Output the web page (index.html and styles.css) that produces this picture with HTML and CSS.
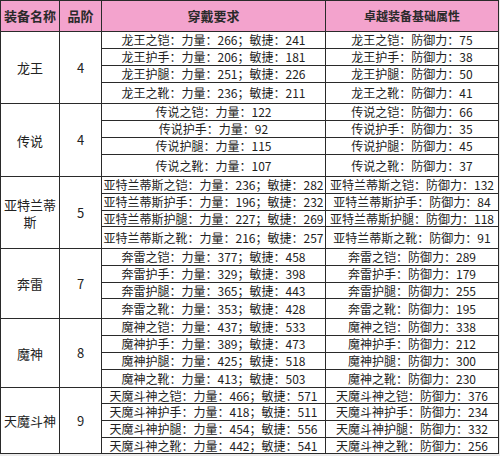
FILE: index.html
```html
<!DOCTYPE html>
<html lang="zh">
<head>
<meta charset="utf-8">
<title>装备属性表</title>
<link rel="stylesheet" href="styles.css">
</head>
<body>
<table class="equip">
  <colgroup>
    <col class="c-name"><col class="c-tier"><col class="c-req"><col class="c-attr">
  </colgroup>
  <thead>
    <tr class="head">
      <th>装备名称</th><th>品阶</th><th>穿戴要求</th><th class="small">卓越装备基础属性</th>
    </tr>
  </thead>
  <tbody>
    <tr class="r17"><td rowspan="4" class="name">龙王</td><td rowspan="4" class="tier">4</td><td>龙王之铠：力量：266；敏捷：241</td><td>龙王之铠：防御力：75</td></tr>
    <tr class="r17"><td>龙王护手：力量：206；敏捷：181</td><td>龙王护手：防御力：38</td></tr>
    <tr class="r17"><td>龙王护腿：力量：251；敏捷：226</td><td>龙王护腿：防御力：50</td></tr>
    <tr class="r21"><td>龙王之靴：力量：236；敏捷：211</td><td>龙王之靴：防御力：41</td></tr>

    <tr class="r17"><td rowspan="4" class="name">传说</td><td rowspan="4" class="tier">4</td><td>传说之铠：力量：122</td><td>传说之铠：防御力：66</td></tr>
    <tr class="r17"><td>传说护手：力量：92</td><td>传说护手：防御力：35</td></tr>
    <tr class="r17"><td>传说护腿：力量：115</td><td>传说护腿：防御力：45</td></tr>
    <tr class="r22"><td>传说之靴：力量：107</td><td>传说之靴：防御力：37</td></tr>

    <tr class="r17"><td rowspan="4" class="name">亚特兰蒂斯</td><td rowspan="4" class="tier">5</td><td>亚特兰蒂斯之铠：力量：236；敏捷：282</td><td>亚特兰蒂斯之铠：防御力：132</td></tr>
    <tr class="r17"><td>亚特兰蒂斯护手：力量：196；敏捷：232</td><td>亚特兰蒂斯护手：防御力：84</td></tr>
    <tr class="r16"><td>亚特兰蒂斯护腿：力量：227；敏捷：269</td><td>亚特兰蒂斯护腿：防御力：118</td></tr>
    <tr class="r22"><td>亚特兰蒂斯之靴：力量：216；敏捷：257</td><td>亚特兰蒂斯之靴：防御力：91</td></tr>

    <tr class="r17"><td rowspan="4" class="name">奔雷</td><td rowspan="4" class="tier">7</td><td>奔雷之铠：力量：377；敏捷：458</td><td>奔雷之铠：防御力：289</td></tr>
    <tr class="r17"><td>奔雷护手：力量：329；敏捷：398</td><td>奔雷护手：防御力：179</td></tr>
    <tr class="r16"><td>奔雷护腿：力量：365；敏捷：443</td><td>奔雷护腿：防御力：255</td></tr>
    <tr class="r20"><td>奔雷之靴：力量：353；敏捷：428</td><td>奔雷之靴：防御力：195</td></tr>

    <tr class="r17"><td rowspan="4" class="name">魔神</td><td rowspan="4" class="tier">8</td><td>魔神之铠：力量：437；敏捷：533</td><td>魔神之铠：防御力：338</td></tr>
    <tr class="r17"><td>魔神护手：力量：389；敏捷：473</td><td>魔神护手：防御力：212</td></tr>
    <tr class="r17"><td>魔神护腿：力量：425；敏捷：518</td><td>魔神护腿：防御力：300</td></tr>
    <tr class="r18"><td>魔神之靴：力量：413；敏捷：503</td><td>魔神之靴：防御力：230</td></tr>

    <tr class="r16"><td rowspan="4" class="name">天魔斗神</td><td rowspan="4" class="tier">9</td><td>天魔斗神之铠：力量：466；敏捷：571</td><td>天魔斗神之铠：防御力：376</td></tr>
    <tr class="r17"><td>天魔斗神护手：力量：418；敏捷：511</td><td>天魔斗神护手：防御力：234</td></tr>
    <tr class="r17"><td>天魔斗神护腿：力量：454；敏捷：556</td><td>天魔斗神护腿：防御力：332</td></tr>
    <tr class="r16"><td>天魔斗神之靴：力量：442；敏捷：541</td><td>天魔斗神之靴：防御力：256</td></tr>
  </tbody>
</table>
</body>
</html>
```
FILE: styles.css
```css
html, body {
  margin: 0;
  padding: 0;
  background: #ebebeb;
}
body {
  width: 500px;
  height: 456px;
  overflow: hidden;
  font-family: "Noto Sans CJK SC", "Noto Sans", sans-serif;
  color: #222;
}
.equip {
  border-collapse: collapse;
  table-layout: fixed;
  width: 498px;
  background: #fff;
  font-size: 12px;
  line-height: 14px;
}
.c-name { width: 59px; }
.c-tier { width: 42px; }
.c-req { width: 224px; }
.c-attr { width: 173px; }
.equip th, .equip td {
  border: 1px solid #2a2a2a;
  padding: 0;
  text-align: center;
  vertical-align: middle;
  white-space: nowrap;
  overflow: hidden;
}
.equip th {
  background: #f3a3cd;
  font-weight: bold;
  font-size: 13px;
  color: #2a2a2a;
}
.equip th.small { font-size: 12px; }
.head { height: 31px; }
.equip td.name {
  white-space: normal;
  font-size: 13px;
  line-height: 17px;
  padding: 0 2px;
}
.equip td.tier {
  font-size: 13px;
}
.r16 { height: 16px; }
.r17 { height: 17px; }
.r18 { height: 18px; }
.r20 { height: 20px; }
.r21 { height: 21px; }
.r22 { height: 22px; }
```
